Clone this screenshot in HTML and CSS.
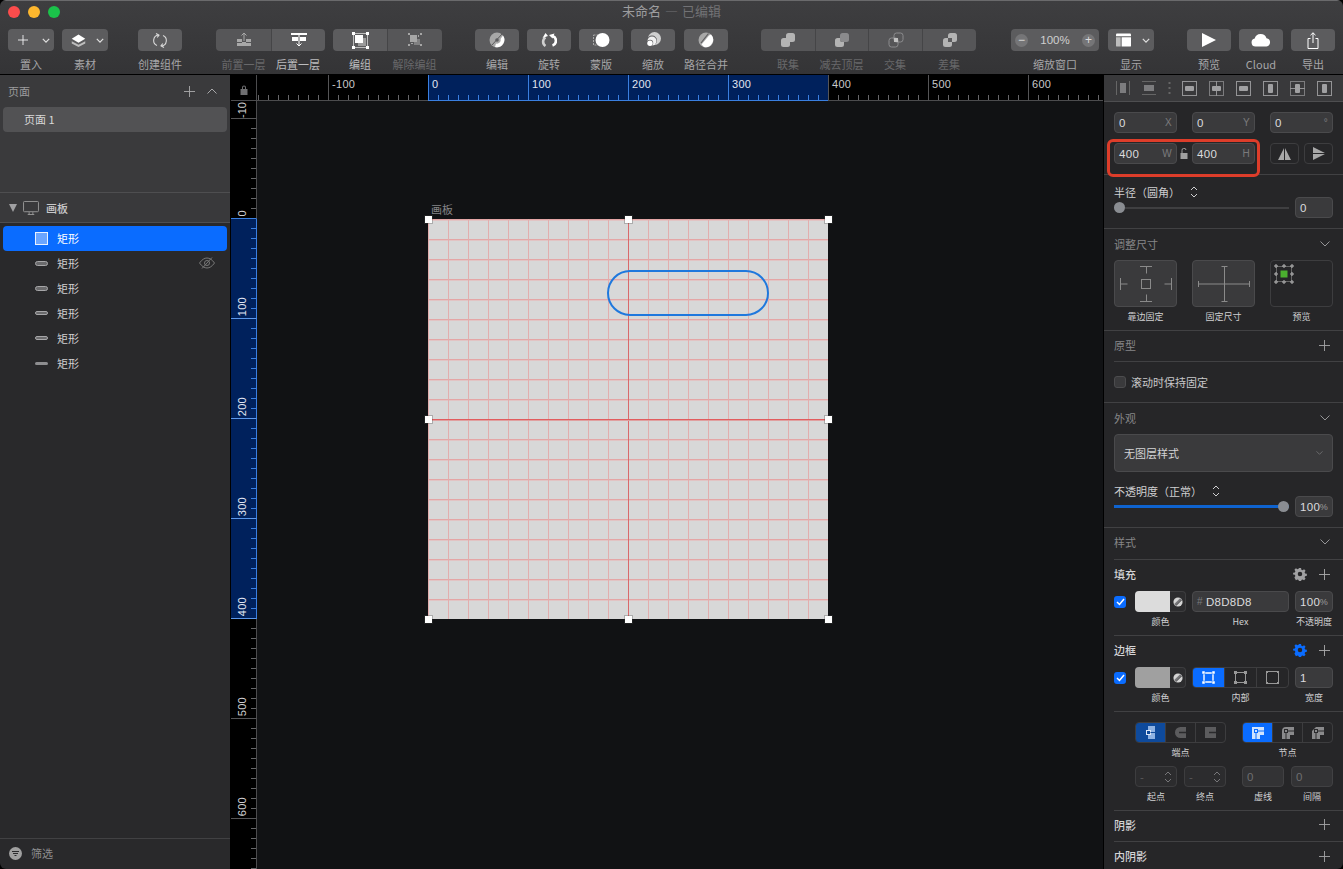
FILE: index.html
```html
<!DOCTYPE html>
<html lang="zh-CN">
<head>
    <meta charset="UTF-8">
    <meta name="viewport" content="width=device-width, initial-scale=1.0">
    <title>未命名 — 已编辑</title>
    <link rel="stylesheet" href="styles.css">
</head>

<body>
    <svg class="defs" width="0" height="0">
        <symbol id="plus" viewBox="0 0 12 12"><path d="M6 0v12M0 6h12" stroke="currentColor" fill="none"/></symbol>
        <symbol id="down" viewBox="0 0 10 6"><path d="M.5 .5l4.500 4.500 4.500-4.500" stroke="currentColor" stroke-width=".9" fill="none"/></symbol>
        <symbol id="chev" viewBox="0 0 10 6"><path d="M1 1l4 4 4-4" stroke="currentColor" stroke-width="1.500" fill="none"/></symbol>
        <symbol id="up" viewBox="0 0 10 6"><path d="M.5 5.500l4.500-4.500 4.500 4.500" stroke="currentColor" fill="none"/></symbol>
        <symbol id="updown" viewBox="0 0 8 12"><path d="M1 4l3-3 3 3M1 8l3 3 3-3" stroke="currentColor" fill="none"/></symbol>
        <symbol id="gear" viewBox="0 0 14 14"><path d="M7 4.400a2.600 2.600 0 1 0 0 5.200 2.600 2.600 0 0 0 0-5.200zM5.800 0h2.400l.4 2 1.300.6 1.800-1.100 1.700 1.700-1.100 1.800.6 1.300 2 .4v2.400l-2 .4-.6 1.300 1.100 1.800-1.700 1.700-1.800-1.100-1.300.6-.4 2H5.800l-.4-2-1.300-.6-1.800 1.100L.6 11.100l1.100-1.800-.6-1.300-2-.4V5.600l2-.4.6-1.300L.6 2.100 2.300.4l1.800 1.100 1.300-.6z" fill="currentColor" fill-rule="evenodd" transform="translate(.9 .9) scale(.87)"/></symbol>
        <symbol id="tint" viewBox="0 0 12 12"><circle cx="6" cy="6" r="5.500" fill="#d4d4d4"/><path d="M1.500 8.500L8.500 1.500 10.500 3.500 3.500 10.500z" fill="#77777a"/><path d="M3.500 10.500L10.500 3.500" stroke="#2a2a2c" stroke-width=".8"/></symbol>
        <symbol id="bool" viewBox="0 0 16 16"><rect x="6" y="1" width="9" height="9" rx="2.500"/><rect x="1" y="6" width="9" height="9" rx="2.500"/></symbol>
    </svg>

    <div class="window">
        <header class="topbar">
            <div class="titlerow">
                <div class="lights">
                    <span class="light red"></span>
                    <span class="light yellow"></span>
                    <span class="light green"></span>
                </div>
                <div class="doctitle">未命名 <span>— 已编辑</span></div>
                <div></div>
            </div>
            <div class="toolbar">
                <div class="tool w46">
                    <div class="btn split">
                        <svg class="plusicon" width="10" height="10"><use href="#plus"/></svg>
                        <svg class="chev" width="8" height="5"><use href="#chev"/></svg>
                    </div>
                    <span class="lbl">置入</span>
                </div>
                <div class="tool w46 ml8">
                    <div class="btn split">
                        <svg width="15" height="15" viewBox="0 0 20 20"><path d="M1 11l9 4.500 9-4.500v3l-9 4.500L1 14z" fill="#bdbdbd"/><path d="M10 2l9 5.500-9 5.500-9-5.500z" fill="#fff"/></svg>
                        <svg class="chev" width="8" height="5"><use href="#chev"/></svg>
                    </div>
                    <span class="lbl">素材</span>
                </div>
                <div class="tool w44 ml30">
                    <div class="btn">
                        <svg width="14" height="15" viewBox="0 0 14 15" fill="none" stroke="#d8d8d8" stroke-width="1.100"><path d="M5.500 2A5.500 5.500 0 0 0 4 12.500"/><path d="M8.500 13A5.500 5.500 0 0 0 10 2.500"/><path d="M3 .5L6 2.200 4.200 4.500M11 14.500L8 12.800l1.800-2.300"/></svg>
                    </div>
                    <span class="lbl">创建组件</span>
                </div>
                <div class="tool w55 ml34 first">
                    <div class="btn off">
                        <svg width="16" height="16" viewBox="0 0 16 16"><path d="M8 9V1M5.500 3.500L8 1l2.500 2.500" stroke="#a8a8a8" fill="none"/><path d="M1 7h5v3h4V7h5v3h-5v1h5v3H1v-3h5v-1H1z" fill="#a8a8a8"/></svg>
                    </div>
                    <span class="lbl dim">前置一层</span>
                </div>
                <div class="tool w54 last">
                    <div class="btn">
                        <svg width="16" height="16" viewBox="0 0 16 16"><path d="M0 1h16v2H0zM1 5h6v4H1zM9 5h6v4H9z" fill="#fff"/><path d="M8 3v11M5.500 11.500L8 14l2.500-2.500" stroke="#fff" fill="none"/></svg>
                    </div>
                    <span class="lbl strong">后置一层</span>
                </div>
                <div class="tool w54 ml8 first">
                    <div class="btn">
                        <svg width="17" height="17" viewBox="0 0 17 17"><rect x="1.500" y="1.500" width="14" height="14" fill="none" stroke="#bdbdbd"/><rect x="6" y="6" width="8" height="8" fill="#9a9a9a"/><rect x="3" y="3" width="8" height="8" fill="#fff"/><path d="M0 0h3v3H0zM14 0h3v3h-3zM0 14h3v3H0zM14 14h3v3h-3z" fill="#fff"/></svg>
                    </div>
                    <span class="lbl strong">编组</span>
                </div>
                <div class="tool w55 last">
                    <div class="btn off">
                        <svg width="16" height="16" viewBox="0 0 16 16" fill="#a6a6a6"><path d="M1 1h2v2H1zM13 12h2v2h-2zM1 12h2v2H1zM13 1h2v2h-2z"/><rect x="3" y="3" width="7" height="7"/><path d="M7 7h6v6H7z" opacity=".55"/><path d="M11 3h1v2h-1zM4 11h2v1H4z"/></svg>
                    </div>
                    <span class="lbl dim">解除编组</span>
                </div>
                <div class="tool w44 ml33">
                    <div class="btn">
                        <svg width="16" height="16" viewBox="0 0 16 16"><circle cx="8" cy="8" r="7.500" fill="#a8a8a8"/><path d="M14 3.500A7.500 7.500 0 0 1 6 15l1-3.500A3.600 3.600 0 0 0 11.500 7z" fill="#fff"/><circle cx="8" cy="8" r="1.800" fill="#5c5c5e"/><path d="M3 13L13 2" stroke="#5c5c5e"/></svg>
                    </div>
                    <span class="lbl">编辑</span>
                </div>
                <div class="tool w44 ml8">
                    <div class="btn">
                        <svg width="16" height="15" viewBox="0 0 16 15" fill="none" stroke-width="2.600"><path d="M4.500 4.500A5 5 0 0 0 4.500 13" stroke="#d0d0d0"/><path d="M11.500 12.500A5 5 0 0 0 11.500 3" stroke="#fff"/><path d="M1.500 5L7 3 4.500 0zM13.500 .5L8 2l3.500 3.500z" fill="#fff"/></svg>
                    </div>
                    <span class="lbl">旋转</span>
                </div>
                <div class="tool w44 ml8">
                    <div class="btn">
                        <svg width="17" height="16" viewBox="0 0 17 16"><rect x=".5" y="3" width="10" height="10" fill="none" stroke="#a8a8a8" stroke-dasharray="2 1"/><circle cx="9.500" cy="8" r="7" fill="#fff"/></svg>
                    </div>
                    <span class="lbl">蒙版</span>
                </div>
                <div class="tool w44 ml8">
                    <div class="btn">
                        <svg width="16" height="16" viewBox="0 0 16 16"><circle cx="9.500" cy="6.500" r="6.500" fill="#d0d0d0"/><circle cx="7" cy="8.500" r="5" fill="#5c5c5e"/><circle cx="7" cy="9" r="4.500" fill="#f0f0f0"/><circle cx="5" cy="11" r="3.200" fill="#5c5c5e"/><circle cx="5" cy="11.300" r="2.700" fill="#fff"/></svg>
                    </div>
                    <span class="lbl">缩放</span>
                </div>
                <div class="tool w44 ml9">
                    <div class="btn">
                        <svg width="16" height="16" viewBox="0 0 16 16"><circle cx="8" cy="8" r="7.500" fill="#a8a8a8"/><path d="M13 2.500A7.500 7.500 0 0 1 6 15L3.500 12.500 11 3.500z" fill="#fff"/><path d="M3 11L10.500 1.500" stroke="#5c5c5e" stroke-width="1.200"/></svg>
                    </div>
                    <span class="lbl">路径合并</span>
                </div>
                <div class="tool w54 ml33 first">
                    <div class="btn off">
                        <svg class="boolset" width="16" height="16"><use href="#bool"/></svg>
                    </div>
                    <span class="lbl dim">联集</span>
                </div>
                <div class="tool w53 last-none">
                    <div class="btn off">
                        <svg width="16" height="16" viewBox="0 0 16 16"><rect x="6" y="1" width="9" height="9" rx="2.500" fill="#8b8b8d"/><path d="M3.500 6H6v2a2 2 0 0 0 2 2h2v2.500A2.500 2.500 0 0 1 7.500 15h-4A2.500 2.500 0 0 1 1 12.500v-4A2.500 2.500 0 0 1 3.500 6z" fill="#b4b4b4"/></svg>
                    </div>
                    <span class="lbl dim">减去顶层</span>
                </div>
                <div class="tool w54 last-none">
                    <div class="btn off">
                        <svg width="16" height="16" viewBox="0 0 16 16"><rect x="6" y="1" width="9" height="9" rx="2.500" fill="none" stroke="#8b8b8d"/><rect x="1" y="6" width="9" height="9" rx="2.500" fill="none" stroke="#8b8b8d"/><rect x="6" y="6" width="4" height="4" fill="#c0c0c0"/></svg>
                    </div>
                    <span class="lbl dim">交集</span>
                </div>
                <div class="tool w54 last">
                    <div class="btn off">
                        <svg width="16" height="16" viewBox="0 0 16 16"><rect x="6" y="1" width="9" height="9" rx="2.500" fill="#b4b4b4"/><rect x="1" y="6" width="9" height="9" rx="2.500" fill="#b4b4b4"/><rect x="6" y="6" width="4" height="4" fill="#5c5c5e"/></svg>
                    </div>
                    <span class="lbl dim">差集</span>
                </div>
                <div class="tool w88 ml35">
                    <div class="btn zoombtn">
                        <span class="zoomdot">−</span>
                        <span class="zoomval">100%</span>
                        <span class="zoomdot">+</span>
                    </div>
                    <span class="lbl">缩放窗口</span>
                </div>
                <div class="tool w46 ml9">
                    <div class="btn split showbtn">
                        <svg width="15" height="14" viewBox="0 0 16 14"><path d="M1 0h14a1 1 0 0 1 1 1v2H0V1a1 1 0 0 1 1-1z" fill="#fff"/><path d="M0 4h5v10H1a1 1 0 0 1-1-1z" fill="#bdbdbd"/><path d="M6 4h10v9a1 1 0 0 1-1 1H6z" fill="#fff"/></svg>
                        <svg class="chev" width="8" height="5"><use href="#chev"/></svg>
                    </div>
                    <span class="lbl">显示</span>
                </div>
                <div class="tool w44 ml33">
                    <div class="btn">
                        <svg width="14" height="14" viewBox="0 0 14 14"><path d="M0 0l14 7-14 7z" fill="#fff"/></svg>
                    </div>
                    <span class="lbl">预览</span>
                </div>
                <div class="tool w44 ml8">
                    <div class="btn">
                        <svg width="20" height="13" viewBox="0 0 20 13"><path d="M4.500 12.500a4 4 0 0 1-.8-7.900A6.200 6.200 0 0 1 15.500 4.200a4.200 4.200 0 0 1 0 8.300z" fill="#fff"/></svg>
                    </div>
                    <span class="lbl">Cloud</span>
                </div>
                <div class="tool w44 ml8">
                    <div class="btn">
                        <svg width="12" height="17" viewBox="0 0 12 17" fill="none" stroke="#fff"><path d="M3.500 6.500H1v10h10v-10H8.500M6 11V.8M3.500 3.200L6 .8l2.500 2.400"/></svg>
                    </div>
                    <span class="lbl">导出</span>
                </div>
            </div>
        </header>

        <main class="main">
            <aside class="leftpanel">
                <section class="pages">
                    <div class="panelhead">
                        <span>页面</span>
                        <div class="headicons">
                            <svg width="11" height="11"><use href="#plus"/></svg>
                            <svg width="10" height="6"><use href="#up"/></svg>
                        </div>
                    </div>
                    <div class="pagerow">页面 1</div>
                </section>
                <div class="boardhead">
                    <span class="caret"></span>
                    <svg width="16" height="14" viewBox="0 0 17 15" fill="none" stroke="#9a9a9a"><rect x=".5" y=".5" width="16" height="11" rx="1"/><path d="M5 14.500h7M6.500 12v2.500M10.500 12v2.500"/></svg>
                    <span class="boardname">画板</span>
                </div>
                <div class="layers">
                    <div class="layer selected">
                        <span class="rectglyph"></span>
                        <span>矩形</span>
                    </div>
                    <div class="layer">
                        <span class="pill h5"></span>
                        <span>矩形</span>
                        <svg class="eye" width="16" height="12" viewBox="0 0 16 12" fill="none" stroke="#777"><path d="M.5 6C3 2.500 5.500 1 8 1s5 1.500 7.500 5C13 9.500 10.500 11 8 11S3 9.500.5 6z"/><circle cx="8" cy="6" r="2.500"/><path d="M3 11.500L13 .5"/></svg>
                    </div>
                    <div class="layer"><span class="pill h5"></span><span>矩形</span></div>
                    <div class="layer"><span class="pill h4"></span><span>矩形</span></div>
                    <div class="layer"><span class="pill h4"></span><span>矩形</span></div>
                    <div class="layer"><span class="pill h3"></span><span>矩形</span></div>
                </div>
                <div class="filterbar">
                    <svg width="13" height="13" viewBox="0 0 13 13"><circle cx="6.500" cy="6.500" r="6.500" fill="#a0a0a0"/><path d="M3 4.500h7M4 6.500h5M5.500 8.500h2" stroke="#2a2a2c" stroke-width="1.100"/></svg>
                    <span>筛选</span>
                </div>
            </aside>

            <div class="center">
                <div class="rulerrow">
                    <div class="corner">
                        <svg width="8" height="10" viewBox="0 0 8 10"><path d="M2 4V2.500a2 2 0 0 1 4 0V4h1.500v6H.5V4zM3 4h2V2.500a1 1 0 0 0-2 0z" fill="#6f6f71" fill-rule="evenodd"/></svg>
                    </div>
                    <div class="hruler">
                        <div class="hcell lead"></div>
                        <div class="hcell"><span>-100</span></div>
                        <div class="hcell blue"><span>0</span></div>
                        <div class="hcell blue"><span>100</span></div>
                        <div class="hcell blue"><span>200</span></div>
                        <div class="hcell blue"><span>300</span></div>
                        <div class="hcell"><span>400</span></div>
                        <div class="hcell"><span>500</span></div>
                        <div class="hcell tail"><span>600</span></div>
                    </div>
                </div>
                <div class="canvasrow">
                    <div class="vruler">
                        <div class="vcell lead"><span>-10</span></div>
                        <div class="vcell topblue"><span>0</span></div>
                        <div class="vcell blue"><span>100</span></div>
                        <div class="vcell blue"><span>200</span></div>
                        <div class="vcell blue"><span>300</span></div>
                        <div class="vcell blue"><span>400</span></div>
                        <div class="vcell"><span>500</span></div>
                        <div class="vcell"><span>600</span></div>
                        <div class="vcell tail"></div>
                    </div>
                    <div class="canvas">
                        <div class="boardlabel">画板</div>
                        <div class="artboard">
                            <div class="midline vert"></div>
                            <div class="midline horiz"></div>
                            <div class="capsule"></div>
                            <span class="handle tl"></span>
                            <span class="handle tc"></span>
                            <span class="handle tr"></span>
                            <span class="handle ml"></span>
                            <span class="handle mr"></span>
                            <span class="handle bl"></span>
                            <span class="handle bc"></span>
                            <span class="handle br"></span>
                        </div>
                    </div>
                </div>
            </div>

            <aside class="inspector">
                <div class="alignbar">
                    <svg width="14" height="14" viewBox="0 0 14 14"><path d="M.5 0v14M13.500 0v14" stroke="#666" fill="none"/><rect x="4" y="2" width="6" height="10" fill="#7c7c7e"/></svg>
                    <svg width="14" height="14" viewBox="0 0 14 14"><path d="M0 .5h14M0 13.500h14" stroke="#666" fill="none"/><rect x="2" y="4" width="10" height="6" fill="#7c7c7e"/></svg>
                    <svg class="dots" width="3" height="12" viewBox="0 0 3 12"><path d="M.5 0h2v2h-2zM.5 5h2v2h-2zM.5 10h2v2h-2z" fill="#666"/></svg>
                    <svg width="15" height="15" viewBox="0 0 15 15"><rect x=".5" y=".5" width="14" height="14" fill="none" stroke="#949496"/><rect x="3" y="5" width="9" height="5" rx="1" fill="#a0a0a2"/></svg>
                    <svg width="15" height="15" viewBox="0 0 15 15"><rect x=".5" y=".5" width="14" height="14" fill="none" stroke="#7c7c7e"/><rect x="3" y="5" width="9" height="5" rx="1" fill="#a0a0a2"/><path d="M7.500 0v5M7.500 10v5" stroke="#949496"/></svg>
                    <svg width="15" height="15" viewBox="0 0 15 15"><rect x=".5" y=".5" width="14" height="14" fill="none" stroke="#949496"/><rect x="3" y="5" width="9" height="5" rx="1" fill="#a0a0a2"/></svg>
                    <svg width="15" height="15" viewBox="0 0 15 15"><rect x=".5" y=".5" width="14" height="14" fill="none" stroke="#949496"/><rect x="5" y="3" width="5" height="9" rx="1" fill="#a0a0a2"/></svg>
                    <svg width="15" height="15" viewBox="0 0 15 15"><rect x=".5" y=".5" width="14" height="14" fill="none" stroke="#7c7c7e"/><rect x="5" y="3" width="5" height="9" rx="1" fill="#a0a0a2"/><path d="M0 7.500h5M10 7.500h5" stroke="#949496"/></svg>
                    <svg width="15" height="15" viewBox="0 0 15 15"><rect x=".5" y=".5" width="14" height="14" fill="none" stroke="#949496"/><rect x="5" y="3" width="5" height="9" rx="1" fill="#a0a0a2"/></svg>
                </div>

                <section class="sec geom">
                    <div class="fieldrow">
                        <div class="field w63"><span>0</span><em>X</em></div>
                        <div class="field w63"><span>0</span><em>Y</em></div>
                        <div class="field w63"><span>0</span><em>°</em></div>
                    </div>
                    <div class="fieldrow">
                        <div class="field w63"><span>400</span><em>W</em></div>
                        <div class="field w63"><span>400</span><em>H</em></div>
                        <div class="flips">
                            <div class="flip"><svg width="13" height="12" viewBox="0 0 13 12"><path d="M6 0v12H0zM7 0l6 12H7z" fill="#a8a8a8"/></svg></div>
                            <div class="flip"><svg width="12" height="13" viewBox="0 0 12 13"><path d="M0 0l12 6H0zM0 7h12L0 13z" fill="#a8a8a8"/></svg></div>
                        </div>
                    </div>
                    <svg class="ratiolock" width="8" height="11" viewBox="0 0 8 11"><path d="M.5 5h7v6h-7z" fill="#a0a0a0"/><path d="M2 5V2.500a2 2 0 0 1 4-.5" fill="none" stroke="#a0a0a0"/></svg>
                    <div class="highlight"></div>
                </section>

                <section class="sec radius">
                    <div class="lineLabel">半径（圆角）<svg width="8" height="12"><use href="#updown"/></svg></div>
                    <div class="sliderrow">
                        <div class="track"><span class="knob start"></span></div>
                        <div class="field w38"><span>0</span></div>
                    </div>
                </section>

                <section class="sec resize">
                    <div class="sechead"><span>调整尺寸</span><svg width="10" height="6"><use href="#down"/></svg></div>
                    <div class="pinrow">
                        <div class="pincol">
                            <div class="pinbox raised">
                                <svg width="52" height="36" viewBox="0 0 52 36" fill="none" stroke="#8a8a8a"><rect x="21.500" y="13.500" width="9" height="9"/><path d="M20 .5h12M26.500 .5v7M20 35.500h12M26.500 35.500v-7M.5 12v12M.5 18h7M51.500 12v12M51.500 18h-7"/></svg>
                            </div>
                            <span class="cap">靠边固定</span>
                        </div>
                        <div class="pincol">
                            <div class="pinbox raised">
                                <svg width="52" height="36" viewBox="0 0 52 36" fill="none" stroke="#8a8a8a"><path d="M.5 15v6M51.500 15v6M.5 18h51M23.500 .5h6M23.500 35.500h6M26.500 .5v35"/></svg>
                            </div>
                            <span class="cap">固定尺寸</span>
                        </div>
                        <div class="pincol">
                            <div class="pinbox preview">
                                <svg width="20" height="20" viewBox="0 0 20 20"><rect x="2.500" y="2.500" width="15" height="15" fill="none" stroke="#666"/><rect x="6.500" y="6.500" width="7" height="7" fill="#4bb02f"/><path d="M1 1h2v2H1zM9 1h2v2H9zM17 1h2v2h-2zM1 9h2v2H1zM17 9h2v2h-2zM1 17h2v2H1zM9 17h2v2H9zM17 17h2v2h-2z" fill="#262628" stroke="#bbb"/></svg>
                            </div>
                            <span class="cap">预览</span>
                        </div>
                    </div>
                </section>

                <section class="sec proto">
                    <div class="sechead ruled"><span>原型</span><svg width="11" height="11"><use href="#plus"/></svg></div>
                    <div class="stickrow">
                        <span class="check"></span>
                        <span>滚动时保持固定</span>
                    </div>
                </section>

                <section class="sec look">
                    <div class="sechead"><span>外观</span><svg width="10" height="6"><use href="#down"/></svg></div>
                    <div class="select"><span>无图层样式</span><svg width="7" height="4"><use href="#down"/></svg></div>
                    <div class="lineLabel opacity">不透明度（正常）<svg width="8" height="12"><use href="#updown"/></svg></div>
                    <div class="sliderrow">
                        <div class="track filled"><span class="knob end"></span></div>
                        <div class="field w38"><span>100</span><em class="pct">%</em></div>
                    </div>
                </section>

                <section class="sec styles">
                    <div class="sechead ruled tall"><span>样式</span><svg width="10" height="6"><use href="#down"/></svg></div>
                    <div class="sechead strong"><span>填充</span><div class="headicons"><svg class="gearicon" width="14" height="14"><use href="#gear"/></svg><svg width="11" height="11"><use href="#plus"/></svg></div></div>
                    <div class="stylerow">
                        <span class="check on"><svg width="9" height="8" viewBox="0 0 9 8"><path d="M1 4l2.500 2.500L8 1" stroke="#fff" stroke-width="1.500" fill="none"/></svg></span>
                        <div class="swatchcol">
                            <div class="swatch"><span class="chip light-chip"></span><span class="chipend"><svg width="10" height="10"><use href="#tint"/></svg></span></div>
                            <span class="cap">颜色</span>
                        </div>
                        <div class="hexcol">
                            <div class="field hex"><em>#</em><span>D8D8D8</span></div>
                            <span class="cap">Hex</span>
                        </div>
                        <div class="widthcol">
                            <div class="field w38"><span>100</span><em class="pct">%</em></div>
                            <span class="cap">不透明度</span>
                        </div>
                    </div>
                    <div class="rule"></div>
                    <div class="sechead strong"><span>边框</span><div class="headicons"><svg class="gearicon active" width="14" height="14"><use href="#gear"/></svg><svg width="11" height="11"><use href="#plus"/></svg></div></div>
                    <div class="stylerow">
                        <span class="check on"><svg width="9" height="8" viewBox="0 0 9 8"><path d="M1 4l2.500 2.500L8 1" stroke="#fff" stroke-width="1.500" fill="none"/></svg></span>
                        <div class="swatchcol">
                            <div class="swatch"><span class="chip dark-chip"></span><span class="chipend"><svg width="10" height="10"><use href="#tint"/></svg></span></div>
                            <span class="cap">颜色</span>
                        </div>
                        <div class="hexcol">
                            <div class="seg">
                                <span class="segitem blueon"><svg width="13" height="13" viewBox="0 0 13 13"><path d="M2 2h9v9H2z" fill="none" stroke="#fff" stroke-width="1.400"/><path d="M0 0h3v3H0zM10 0h3v3h-3zM0 10h3v3H0zM10 10h3v3h-3z" fill="#fff" stroke="#0a6cff" stroke-width=".5"/></svg></span>
                                <span class="segitem"><svg width="13" height="13" viewBox="0 0 13 13"><path d="M1.500 1.500h10v10h-10z" fill="none" stroke="#999"/><path d="M0 0h3v3H0zM10 0h3v3h-3zM0 10h3v3H0zM10 10h3v3h-3z" fill="#999"/></svg></span>
                                <span class="segitem"><svg width="13" height="13" viewBox="0 0 13 13"><path d="M.5.5h12v12H.5z" fill="none" stroke="#999"/><path d="M0 0h2v2H0zM11 0h2v2h-2zM0 11h2v2H0zM11 11h2v2h-2z" fill="#999"/></svg></span>
                            </div>
                            <span class="cap">内部</span>
                        </div>
                        <div class="widthcol">
                            <div class="field w38"><span>1</span></div>
                            <span class="cap">宽度</span>
                        </div>
                    </div>
                    <div class="rule"></div>
                    <div class="caprow">
                        <div class="capcol">
                            <div class="seg w91">
                                <span class="segitem deepon"><svg width="9" height="13" viewBox="0 0 9 13"><path d="M2 0h7v13H2z" fill="#8fb3e4"/><rect x=".5" y="4.500" width="4" height="4" fill="#0e4a9c" stroke="#dbe6f7"/><path d="M4.500 6.500H9" stroke="#0e4a9c"/></svg></span>
                                <span class="segitem"><svg width="11" height="11" viewBox="0 0 11 11"><path d="M5.500 0H11v11H5.500a5.500 5.500 0 0 1 0-11z" fill="#5c5c5e"/><path d="M4 5.500h7" stroke="#2a2a2c" stroke-width="1.600"/></svg></span>
                                <span class="segitem"><svg width="11" height="11" viewBox="0 0 11 11"><path d="M0 0h11v11H0z" fill="#5c5c5e"/><path d="M4 5.500h7" stroke="#2a2a2c" stroke-width="1.600"/></svg></span>
                            </div>
                            <span class="cap">端点</span>
                        </div>
                        <div class="capcol">
                            <div class="seg w91">
                                <span class="segitem blueon"><svg width="12" height="12" viewBox="0 0 12 12" fill="none"><path d="M4 12V4h8" stroke="#cfe3ff" stroke-width="8"/><path d="M4 12V4h8" stroke="#0a6cff"/><rect x="2.500" y="2.500" width="3" height="3" fill="#cfe3ff" stroke="#0a6cff"/></svg></span>
                                <span class="segitem"><svg width="12" height="12" viewBox="0 0 12 12" fill="none"><path d="M4 12V4h8" stroke="#8a8a8c" stroke-width="8" stroke-linejoin="round"/><path d="M4 12V4h8" stroke="#2a2a2c"/><rect x="2.500" y="2.500" width="3" height="3" fill="#8a8a8c" stroke="#2a2a2c"/></svg></span>
                                <span class="segitem"><svg width="12" height="12" viewBox="0 0 12 12" fill="none"><path d="M4 12V4h8" stroke="#8a8a8c" stroke-width="8" stroke-linejoin="bevel"/><path d="M4 12V4h8" stroke="#2a2a2c"/><rect x="2.500" y="2.500" width="3" height="3" fill="#8a8a8c" stroke="#2a2a2c"/></svg></span>
                            </div>
                            <span class="cap">节点</span>
                        </div>
                    </div>
                    <div class="arrowrow">
                        <div class="miniPair">
                            <div class="minicol"><div class="field faded w42"><span>-</span><svg width="8" height="12"><use href="#updown"/></svg></div><span class="cap">起点</span></div>
                            <div class="minicol"><div class="field faded w42"><span>-</span><svg width="8" height="12"><use href="#updown"/></svg></div><span class="cap">终点</span></div>
                        </div>
                        <div class="miniPair">
                            <div class="minicol"><div class="field muted w42"><span>0</span></div><span class="cap">虚线</span></div>
                            <div class="minicol"><div class="field muted w42"><span>0</span></div><span class="cap">间隔</span></div>
                        </div>
                    </div>
                    <div class="rule"></div>
                    <div class="sechead strong ruled"><span>阴影</span><svg width="11" height="11"><use href="#plus"/></svg></div>
                    <div class="sechead strong"><span>内阴影</span><svg width="11" height="11"><use href="#plus"/></svg></div>
                </section>
            </aside>
        </main>
    </div>
</body>
</html>
```

FILE: styles.css
```css
* {
    box-sizing: border-box;
}

html, body {
    margin: 0;
    height: 100%;
    background: #000;
    overflow: hidden;
}

body {
    font-family: "Noto Sans CJK SC", "Liberation Sans", sans-serif;
    font-size: 11px;
    color: #d0d0d0;
}

svg {
    display: block;
    flex: none;
}

.defs {
    position: absolute;
}

.window {
    width: 1343px;
    height: 869px;
    display: flex;
    flex-direction: column;
    border-radius: 6px;
    overflow: hidden;
}

/* title bar and toolbar */

.topbar {
    height: 75px;
    flex: none;
    background: linear-gradient(#3e3e40, #343436);
    border-top: 1px solid #6a6a6c;
    border-bottom: 1px solid #000;
}

.titlerow {
    height: 21px;
    display: grid;
    grid-template-columns: 1fr auto 1fr;
    align-items: center;
    padding: 0 8px;
}

.lights {
    display: flex;
    gap: 8px;
}

.light {
    width: 12px;
    height: 12px;
    border-radius: 50%;
}

.red { background: #fc4c4c; }
.yellow { background: #fdb72e; }
.green { background: #1bc24a; }

.doctitle {
    font-size: 13px;
    line-height: 20px;
    align-self: start;
    word-spacing: 1px;
    color: #9d9d9f;
}

.doctitle span {
    color: #727275;
}

.toolbar {
    display: flex;
    padding: 7px 0 0 8px;
}

.tool {
    display: flex;
    flex-direction: column;
    align-items: center;
    flex: none;
}

.w44 { width: 44px; }
.w46 { width: 46px; }
.w53 { width: 53px; }
.w54 { width: 54px; }
.w55 { width: 55px; }
.w88 { width: 88px; }
.ml8 { margin-left: 8px; }
.ml9 { margin-left: 9px; }
.ml30 { margin-left: 30px; }
.ml33 { margin-left: 33px; }
.ml34 { margin-left: 34px; }
.ml35 { margin-left: 35px; }

.btn {
    width: 100%;
    height: 22px;
    background: #5c5c5e;
    border-radius: 4px;
    display: flex;
    align-items: center;
    justify-content: center;
    color: #fff;
}

.btn.off {
    background: #565658;
}

.btn.split {
    justify-content: space-between;
    padding: 0 4px 0 9px;
}

.btn.split .chev {
    color: #e0e0e0;
}

.btn.showbtn {
    padding-left: 8px;
}

.plusicon {
    margin-left: 1px;
}

.tool.first .btn {
    border-radius: 4px 0 0 4px;
}

.tool.last .btn {
    border-radius: 0 4px 4px 0;
    border-left: 1px solid #454547;
}

.tool.last-none .btn {
    border-radius: 0;
    border-left: 1px solid #454547;
}

.boolset {
    fill: #b4b4b4;
}

.lbl {
    margin-top: 6px;
    line-height: 15px;
    white-space: nowrap;
    color: #a6a6a8;
}

.lbl.dim {
    color: #68686a;
}

.lbl.strong {
    color: #bcbcbe;
}

.zoombtn {
    justify-content: space-between;
    padding: 0 4px;
}

.zoomdot {
    width: 13px;
    height: 13px;
    border-radius: 50%;
    background: #757577;
    font: 12px/13px "Liberation Sans", sans-serif;
    text-align: center;
    color: #dcdcdc;
}

.zoomval {
    font: 11.5px "Liberation Sans", sans-serif;
    color: #d0d0d0;
}

/* main area */

.main {
    flex: 1;
    display: flex;
    min-height: 0;
}

/* left panel */

.leftpanel {
    width: 231px;
    flex: none;
    display: flex;
    flex-direction: column;
    background: #29292b;
    border-right: 1px solid #000;
}

.pages {
    height: 118px;
    background: #3a3a3c;
    border-bottom: 1px solid #4e4e50;
    padding: 0 3px;
}

.panelhead {
    height: 32px;
    display: flex;
    align-items: center;
    justify-content: space-between;
    padding: 0 10px 0 5px;
    color: #9c9c9e;
}

.headicons {
    display: flex;
    align-items: center;
    gap: 12px;
    color: #a8a8aa;
}

.pagerow {
    height: 25px;
    background: #525254;
    border-radius: 4px;
    padding-left: 21px;
    line-height: 25px;
    color: #d8d8d8;
}

.boardhead {
    height: 30px;
    flex: none;
    display: flex;
    align-items: center;
    background: #39393b;
    border-bottom: 1px solid #4e4e50;
    padding-left: 9px;
}

.caret {
    width: 0;
    height: 0;
    border-left: 4.5px solid transparent;
    border-right: 4.5px solid transparent;
    border-top: 8px solid #a0a0a2;
    margin-right: 6px;
}

.boardname {
    margin-left: 7px;
    font-weight: 500;
    color: #c8c8ca;
}

.layers {
    flex: 1;
    padding: 3px 3px 0;
}

.layer {
    height: 25px;
    display: flex;
    align-items: center;
    padding: 0 0 1px 32px;
    gap: 9px;
    color: #d0d0d2;
    border-radius: 4px;
    position: relative;
}

.layer.selected {
    background: #0a6cff;
    color: #fff;
}

.rectglyph {
    width: 13px;
    height: 13px;
    background: #6aa5ff;
    border: 1px solid #e8f1ff;
}

.pill {
    width: 13px;
    background: #6a6a6c;
    border: 1px solid #a6a6a8;
    border-radius: 3px;
}

.h5 { height: 5px; }
.h4 { height: 4px; }
.h3 { height: 3px; border: 0; background: #8e8e90; }

.eye {
    margin-left: auto;
    margin-right: 12px;
}

.filterbar {
    height: 31px;
    flex: none;
    display: flex;
    align-items: center;
    gap: 9px;
    padding: 0 0 2px 9px;
    border-top: 1px solid #414143;
    color: #8e8e90;
}

/* rulers and canvas */

.center {
    width: 872px;
    flex: none;
    display: flex;
    flex-direction: column;
}

.rulerrow {
    height: 26px;
    flex: none;
    display: flex;
    background: #000;
}

.corner {
    width: 26px;
    flex: none;
    display: flex;
    align-items: center;
    justify-content: center;
    border-right: 1px solid #4c4c4e;
    border-bottom: 1px solid #4c4c4e;
    padding-top: 4px;
    padding-left: 1px;
}

.hruler {
    flex: 1;
    display: flex;
    overflow: hidden;
}

.hcell {
    width: 100px;
    flex: none;
    border-left: 1px solid #555557;
    border-bottom: 1px solid #4c4c4e;
    padding: 1px 0 0 3px;
    font: 11px/16px "Liberation Sans", sans-serif;
    letter-spacing: .3px;
    color: #c9c9cb;
    background-image: repeating-linear-gradient(90deg, transparent 0, transparent 9px, #666668 9px, #666668 10px);
    background-size: 10px 5px;
    background-position: 0 bottom;
    background-repeat: repeat-x;
}

.hcell.lead {
    width: 71px;
    border-left: 0;
    background-position: 2px bottom;
}

.hcell.tail {
    width: 75px;
}

.hcell.blue {
    background-color: #00215c;
    background-image: repeating-linear-gradient(90deg, transparent 0, transparent 9px, #3a7fe0 9px, #3a7fe0 10px);
    border-left-color: #3a7fe0;
    border-bottom-color: #3a7fe0;
    color: #e0e6f2;
}

.canvasrow {
    flex: 1;
    display: flex;
    min-height: 0;
}

.vruler {
    width: 26px;
    flex: none;
    background: #000;
    overflow: hidden;
}

.vcell {
    height: 100px;
    display: flex;
    align-items: flex-end;
    padding: 0 0 2px 3px;
    border-right: 1px solid #4c4c4e;
    border-bottom: 1px solid #555557;
    font: 11px/16px "Liberation Sans", sans-serif;
    letter-spacing: .3px;
    color: #d0d0d2;
    background-image: repeating-linear-gradient(180deg, transparent 0, transparent 9px, #666668 9px, #666668 10px);
    background-size: 5px 100%;
    background-position: right top;
    background-repeat: no-repeat;
}

.vcell span {
    writing-mode: vertical-rl;
    transform: rotate(180deg);
}

.vcell.lead {
    height: 18px;
    padding-bottom: 0;
    letter-spacing: 0;
    background-image: none;
}

.vcell.topblue {
    border-bottom-color: #3a7fe0;
}

.vcell.blue {
    background-color: #00215c;
    background-image: repeating-linear-gradient(180deg, transparent 0, transparent 9px, #3a7fe0 9px, #3a7fe0 10px);
    border-right-color: #3a7fe0;
    border-bottom-color: #5b97ea;
    color: #e0e6f2;
}

.vcell.tail {
    border-bottom: 0;
}

.canvas {
    flex: 1;
    position: relative;
    background: #111214;
    overflow: hidden;
}

.boardlabel {
    position: absolute;
    left: 174px;
    top: 100px;
    line-height: 16px;
    color: #858587;
}

.artboard {
    position: absolute;
    left: 171px;
    top: 118px;
    width: 400px;
    height: 400px;
    background-color: #d8d8d8;
    background-image:
        linear-gradient(90deg, #e2aeae 1px, transparent 1px),
        linear-gradient(#e4a6a6 1px, #e2c4c4 1px, #e2c4c4 2px, transparent 2px);
    background-size: 20px 20px;
}

.midline {
    position: absolute;
    background: #d9696b;
}

.midline.vert {
    left: 200px;
    top: 0;
    width: 1px;
    height: 100%;
}

.midline.horiz {
    top: 200px;
    left: 0;
    width: 100%;
    height: 2px;
    background: linear-gradient(#e25c5e 1px, #e0a0a0 1px);
}

.capsule {
    position: absolute;
    left: 179px;
    top: 51px;
    width: 162px;
    height: 46px;
    border: 2px solid #1f78dd;
    border-radius: 23px;
}

.handle {
    position: absolute;
    width: 7px;
    height: 7px;
    background: #fff;
    box-shadow: 0 0 0 1px rgba(70, 70, 70, .3);
}

.tl { left: -3px; top: -3px; }
.tc { left: 197px; top: -3px; }
.tr { left: 397px; top: -3px; }
.ml { left: -3px; top: 197px; }
.mr { left: 397px; top: 197px; }
.bl { left: -3px; top: 397px; }
.bc { left: 197px; top: 397px; }
.br { left: 397px; top: 397px; }

/* inspector */

.inspector {
    width: 240px;
    flex: none;
    background: #262628;
    border-left: 1px solid #000;
    overflow: hidden;
}

.alignbar {
    height: 27px;
    background: #39393b;
    border-bottom: 1px solid #4e4e50;
    display: flex;
    align-items: center;
    padding-left: 12px;
    gap: 12px;
}

.alignbar .dots {
    margin: 0 -1px 0 0;
}

.sec {
    padding: 0 10px;
    border-bottom: 1px solid #414143;
}

.geom {
    height: 73px;
    padding-top: 10px;
    position: relative;
}

.fieldrow {
    display: flex;
    gap: 15px;
    margin-bottom: 10px;
}

.field {
    height: 21px;
    flex: none;
    display: flex;
    align-items: center;
    justify-content: space-between;
    padding: 0 4px;
    background: #3a3a3c;
    border: 1px solid #4a4a4c;
    border-radius: 4px;
    font: 11.5px "Liberation Sans", sans-serif;
    letter-spacing: .3px;
    color: #dcdcde;
}

.field em {
    font-style: normal;
    font-size: 10px;
    color: #7a7a7c;
}

.field em.pct {
    margin-left: -2px;
    font-size: 9px;
    color: #9a9a9c;
}

.w63 { width: 63px; }
.w38 { width: 38px; }
.w42 { width: 42px; }

.flips {
    display: flex;
    gap: 5px;
}

.flip {
    width: 29px;
    height: 21px;
    border: 1px solid #3d3d3f;
    border-radius: 4px;
    display: flex;
    align-items: center;
    justify-content: center;
}

.ratiolock {
    position: absolute;
    left: 76px;
    top: 46px;
}

.highlight {
    position: absolute;
    left: 3px;
    top: 37px;
    width: 153px;
    height: 38px;
    border: 3px solid #dd3d2a;
    border-radius: 6px;
}

.radius {
    height: 54px;
    padding-top: 11px;
}

.lineLabel {
    display: flex;
    align-items: center;
    gap: 10px;
    height: 11px;
    color: #cfcfd1;
}

.sliderrow {
    display: flex;
    align-items: center;
    justify-content: space-between;
}

.track {
    width: 175px;
    height: 2px;
    background: #3f3f41;
    position: relative;
}

.track.filled {
    background: #0f63cf;
    height: 3px;
}

.knob {
    position: absolute;
    top: 50%;
    width: 11px;
    height: 11px;
    margin-top: -5.5px;
    border-radius: 50%;
    background: #8a8d92;
}

.knob.start { left: 0; }
.knob.end { right: 0; }

.resize {
    height: 102px;
}

.sechead {
    height: 31px;
    display: flex;
    align-items: center;
    justify-content: space-between;
    padding: 0 3px 2px 0;
    color: #858587;
}

.sechead > svg {
    color: #a2a2a4;
}

.sechead.ruled {
    margin-right: -10px;
    padding-right: 13px;
    border-bottom: 1px solid #414143;
}

.sechead.tall {
    height: 32px;
    padding-bottom: 4px;
}

.sechead.strong {
    color: #d4d4d6;
    font-weight: 500;
    padding-bottom: 3px;
}

.gearicon {
    color: #a0a0a2;
}

.gearicon.active {
    color: #0a6cff;
}

.pinrow {
    display: flex;
    gap: 15px;
}

.pincol {
    width: 63px;
    display: flex;
    flex-direction: column;
    align-items: center;
}

.pinbox {
    width: 63px;
    height: 47px;
    border-radius: 4px;
    display: flex;
    align-items: center;
    justify-content: center;
}

.pinbox.raised {
    background: #3a3a3c;
    border: 1px solid #4a4a4c;
}

.pinbox.preview {
    border: 1px solid #3d3d3f;
    align-items: flex-start;
    justify-content: flex-start;
    padding: 3px 0 0 3px;
}

.cap {
    margin-top: 2px;
    line-height: 15px;
    white-space: nowrap;
    font-size: 9px;
    color: #d0d0d2;
}

.proto {
    height: 72px;
}

.stickrow {
    height: 40px;
    display: flex;
    align-items: center;
    gap: 5px;
    color: #c8c8ca;
}

.check {
    width: 12px;
    height: 12px;
    flex: none;
    background: #3a3a3c;
    border: 1px solid #4c4c4e;
    border-radius: 3px;
}

.check.on {
    background: #0a6cff;
    border: 0;
    display: flex;
    align-items: center;
    justify-content: center;
}

.look {
    height: 125px;
}

.select {
    height: 38px;
    display: flex;
    align-items: center;
    justify-content: space-between;
    padding: 0 9px;
    background: #3a3a3c;
    border: 1px solid #4a4a4c;
    border-radius: 4px;
    color: #d4d4d6;
}

.select svg {
    color: #8a8a8c;
}

.lineLabel.opacity {
    margin-top: 13px;
}

.styles {
    border-bottom: 0;
}

.stylerow {
    display: flex;
    align-items: flex-start;
    height: 44px;
}

.stylerow .check {
    margin-top: 5px;
}

.swatchcol {
    width: 51px;
    margin-left: 9px;
    display: flex;
    flex-direction: column;
    align-items: center;
}

.swatch {
    width: 51px;
    height: 21px;
    display: flex;
    border-radius: 4px;
    overflow: hidden;
    background: #2c2c2e;
    box-shadow: inset 0 0 0 1px #3d3d3f;
}

.chip {
    width: 35px;
}

.light-chip { background: #dcdcdc; }
.dark-chip { background: #a0a0a0; }

.chipend {
    flex: 1;
    display: flex;
    align-items: center;
    justify-content: center;
}

.hexcol {
    width: 97px;
    margin-left: 6px;
    display: flex;
    flex-direction: column;
    align-items: center;
}

.field.hex {
    width: 97px;
    justify-content: flex-start;
    gap: 3px;
}

.widthcol {
    width: 38px;
    margin-left: 6px;
    display: flex;
    flex-direction: column;
    align-items: center;
}

.rule {
    height: 1px;
    margin-right: -10px;
    background: #414143;
}

.seg {
    width: 97px;
    height: 21px;
    display: flex;
    border: 1px solid #3d3d3f;
    border-radius: 4px;
    overflow: hidden;
}

.seg.w91 {
    width: 91px;
}

.segitem {
    flex: 1;
    display: flex;
    align-items: center;
    justify-content: center;
    border-left: 1px solid #3d3d3f;
}

.segitem:first-child {
    border-left: 0;
}

.segitem.blueon {
    background: #0a6cff;
}

.segitem.deepon {
    background: #0e4a9c;
}

.caprow {
    display: flex;
    justify-content: flex-end;
    gap: 16px;
    padding-top: 10px;
    height: 54px;
}

.capcol {
    display: flex;
    flex-direction: column;
    align-items: center;
}

.arrowrow {
    display: flex;
    justify-content: flex-end;
    gap: 16px;
    height: 44px;
}

.miniPair {
    display: flex;
    gap: 7px;
}

.minicol {
    display: flex;
    flex-direction: column;
    align-items: center;
}

.field.faded {
    background: #2c2c2e;
    border-color: #3d3d3f;
    color: #58585a;
}

.field.faded svg {
    color: #77777a;
}

.field.muted {
    background: #333335;
    border-color: #414143;
    color: #6e6e70;
}
```
